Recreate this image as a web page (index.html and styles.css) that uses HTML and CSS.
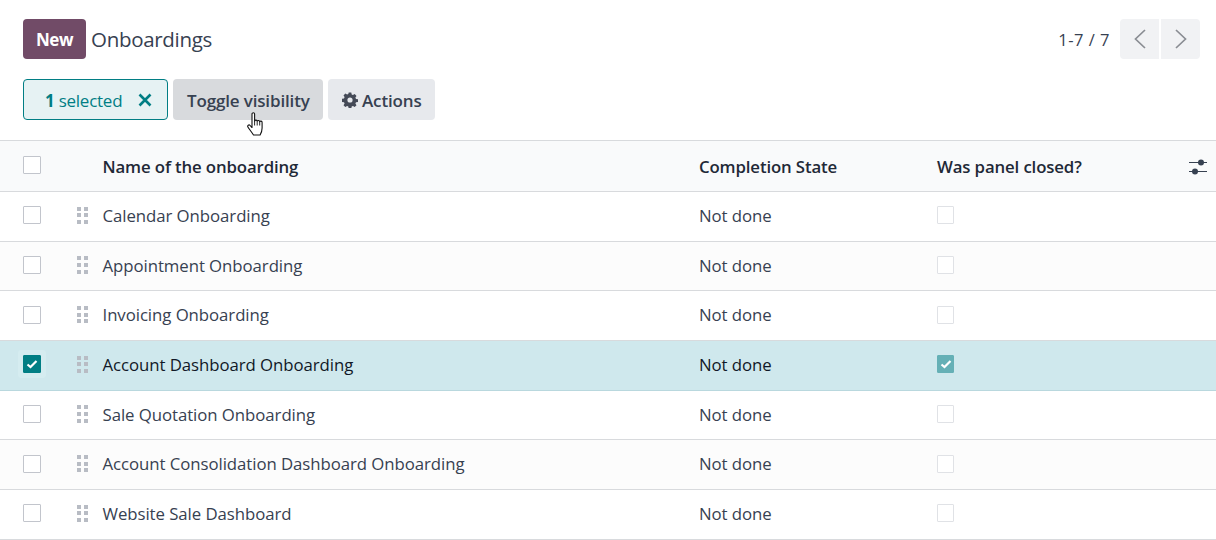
FILE: index.html
```html
<!DOCTYPE html>
<html lang="en">
<head>
<meta charset="utf-8">
<title>Onboardings</title>
<link rel="stylesheet" href="styles.css">
</head>
<body>
<header class="top">
  <button class="btn-new">New</button>
  <h1 class="title">Onboardings</h1>
  <div class="pager">
    <span class="pager-text">1-7 / 7</span>
    <div class="pager-btns">
      <button class="pager-btn"><svg width="16" height="22" viewBox="0 0 16 22"><path d="M13 2 3.500 11 13 20" fill="none" stroke="#8a8d93" stroke-width="1.700"/></svg></button>
      <button class="pager-btn"><svg width="16" height="22" viewBox="0 0 16 22"><path d="M3 2 12.500 11 3 20" fill="none" stroke="#8a8d93" stroke-width="1.700"/></svg></button>
    </div>
  </div>
</header>
<div class="actions">
  <div class="selected"><span><b>1</b> selected</span><svg width="14" height="14" viewBox="0 0 14 14"><path d="M1.500 1.500 12.500 12.500M12.500 1.500 1.500 12.500" stroke="#017e84" stroke-width="2.600"/></svg></div>
  <button class="btn-gray hover">Toggle visibility
    <svg class="cursor" width="18" height="24" viewBox="0 0 18 24"><path d="M5 2c0-1.600 2.600-1.600 2.600 0v7c.4-1.300 2.600-1.200 2.600.3.400-1.200 2.500-1 2.500.4.500-1 2.400-.7 2.400.7v5.600c0 3-1.400 6-2 7H6.500C5 20.500 1.700 16.500.9 15c-.8-1.500 1-2.800 2.200-1.500L5 15.500z" fill="#fff" stroke="#111" stroke-width="1.100" stroke-linejoin="round"/><path d="M7.600 9v4.500M10.200 9.500v4M12.700 10v3.500" stroke="#111" stroke-width=".9"/></svg>
  </button>
  <button class="btn-gray"><svg class="gear" width="16" height="16" viewBox="0 0 16 16"><path fill-rule="evenodd" d="M6.700.5h2.600l.4 2 1.200.6 1.800-1 1.800 1.800-1.100 1.700.6 1.300 2 .4v2.600l-2 .4-.6 1.300 1.100 1.700-1.800 1.800-1.800-1.100-1.200.6-.4 2H6.700l-.4-2-1.200-.6-1.800 1.100-1.800-1.800 1.100-1.700-.6-1.300-2-.4V6.800l2-.4.6-1.300-1.100-1.700 1.800-1.800 1.800 1 1.200-.6zM8 5.400a2.600 2.600 0 1 0 0 5.200 2.600 2.600 0 0 0 0-5.200z" fill="#454a57"/></svg> Actions</button>
</div>
<table class="list">
  <colgroup><col class="c-check"><col class="c-handle"><col class="c-name"><col class="c-state"><col class="c-closed"><col class="c-opt"></colgroup>
  <thead>
    <tr>
      <th><span class="box"></span></th>
      <th></th>
      <th>Name of the onboarding</th>
      <th>Completion State</th>
      <th>Was panel closed?</th>
      <th class="opt"><svg width="18" height="18" viewBox="0 0 18 18"><path d="M0 4.500h18M0 13.500h18" stroke="#374151" stroke-width="1"/><circle cx="12" cy="4.500" r="3" fill="#374151"/><circle cx="6" cy="13.500" r="3" fill="#374151"/></svg></th>
    </tr>
  </thead>
  <tbody>
    <tr><td><span class="box"></span></td><td><span class="grip"><i></i><i></i><i></i><i></i><i></i><i></i></span></td><td>Calendar Onboarding</td><td>Not done</td><td><span class="box light"></span></td><td></td></tr>
    <tr class="alt"><td><span class="box"></span></td><td><span class="grip"><i></i><i></i><i></i><i></i><i></i><i></i></span></td><td>Appointment Onboarding</td><td>Not done</td><td><span class="box light"></span></td><td></td></tr>
    <tr><td><span class="box"></span></td><td><span class="grip"><i></i><i></i><i></i><i></i><i></i><i></i></span></td><td>Invoicing Onboarding</td><td>Not done</td><td><span class="box light"></span></td><td></td></tr>
    <tr class="sel"><td><span class="halo"><span class="box on"><svg width="12" height="10" viewBox="0 0 12 10"><path d="M1.500 5.500 4.500 8 10.500 2" fill="none" stroke="#fff" stroke-width="2.200"/></svg></span></span></td><td><span class="grip"><i></i><i></i><i></i><i></i><i></i><i></i></span></td><td>Account Dashboard Onboarding</td><td>Not done</td><td><span class="box on dim"><svg width="12" height="10" viewBox="0 0 12 10"><path d="M1.500 5.500 4.500 8 10.500 2" fill="none" stroke="#fff" stroke-width="2.200"/></svg></span></td><td></td></tr>
    <tr><td><span class="box"></span></td><td><span class="grip"><i></i><i></i><i></i><i></i><i></i><i></i></span></td><td>Sale Quotation Onboarding</td><td>Not done</td><td><span class="box light"></span></td><td></td></tr>
    <tr class="alt"><td><span class="box"></span></td><td><span class="grip"><i></i><i></i><i></i><i></i><i></i><i></i></span></td><td>Account Consolidation Dashboard Onboarding</td><td>Not done</td><td><span class="box light"></span></td><td></td></tr>
    <tr><td><span class="box"></span></td><td><span class="grip"><i></i><i></i><i></i><i></i><i></i><i></i></span></td><td>Website Sale Dashboard</td><td>Not done</td><td><span class="box light"></span></td><td></td></tr>
  </tbody>
</table>
</body>
</html>
```
FILE: styles.css
```css
* { box-sizing: border-box; }
html, body { margin: 0; padding: 0; background: #fff; overflow: hidden; }
body { width: 1216px; height: 540px; font-family: "Open Sans", "Noto Sans", sans-serif; font-size: 17px; color: #374151; }
button { font: inherit; border: 0; cursor: pointer; }

.top { display: flex; align-items: center; padding: 19px 16px 0 23px; height: 59px; }
.btn-new { width: 63px; height: 40px; background: #714b67; color: #fff; font-weight: 700; border-radius: 4px; padding: 0; font-size: 17px; letter-spacing: -.45px; }
.title { margin: 0 0 0 5px; font-size: 20.5px; font-weight: 400; color: #374151; letter-spacing: -.3px; }
.pager { margin-left: auto; display: flex; align-items: center; gap: 10px; }
.pager-text { font-size: 16.5px; letter-spacing: .5px; }
.pager-btns { display: flex; gap: 2px; }
.pager-btn { width: 39px; height: 40px; background: #f1f2f4; padding: 0; display: flex; align-items: center; justify-content: center; }
.pager-btn:first-child { border-radius: 4px 0 0 4px; }
.pager-btn:last-child { border-radius: 0 4px 4px 0; }

.actions { display: flex; gap: 5px; padding: 20px 0 0 23px; height: 81px; }
.selected { width: 145px; height: 41px; padding: 1px 15px 0 21px; background: #e6f2f3; border: 1px solid #017e84; border-radius: 4px; color: #017e84; display: flex; align-items: center; justify-content: space-between; letter-spacing: -.25px; }
.selected b { font-weight: 700; }
.btn-gray { position: relative; height: 41px; padding: 1px 13px 0 14px; background: #e7e9ed; color: #374151; border-radius: 4px; font-weight: 600; letter-spacing: -.15px; white-space: nowrap; display: flex; align-items: center; gap: 4px; }
.btn-gray.hover { background: #d8dadd; width: 150px; }
.cursor { position: absolute; left: 74px; top: 33px; }

.list { width: 1216px; table-layout: fixed; border-collapse: collapse; }
.c-check { width: 75px; }
.c-handle { width: 27.5px; }
.c-name { width: 596.5px; }
.c-state { width: 238px; }
.c-closed { width: 241px; }
.c-opt { width: 38px; }
.list tr { height: 49.7px; border-top: 1px solid #d8dadd; }
.list tr:last-child { border-bottom: 1px solid #d8dadd; }
.list th, .list td { padding: 0; vertical-align: middle; text-align: left; line-height: 1; }
.list th:first-child, .list td:first-child { padding-left: 23px; }
.list thead tr { background: #f9fafb; height: 51px; }
.list th { padding-top: 2px; font-weight: 600; color: #1f2937; letter-spacing: -.13px; font-size: 16.8px; }
.list td { font-size: 16.8px; letter-spacing: -.06px; }
.list .alt { background: #fcfcfc; }
.list .sel { background: #cfe8ed; color: #111827; border-bottom: 1px solid #b9d8de; }
.list .opt { padding-top: 0; }
.opt svg { display: block; margin: 1px 0 0 11px; }

.box { display: block; width: 18px; height: 18px; margin-bottom: 2px; border: 1px solid #c2c5cc; background: #fff; border-radius: 1px; }
.box.light { border-color: #e0e2e6; width: 17px; height: 18px; }
.box.on { background: #017e84; border-color: #017e84; display: flex; align-items: center; justify-content: center; }
.box.dim { background: #65b0b6; border-color: #65b0b6; width: 17px; }
.list th .box { margin-bottom: 4px; }
.halo { display: block; width: 18px; height: 18px; margin-bottom: 2px; box-shadow: 0 0 0 5px #d5ecf0; border-radius: 1px; }

.grip { display: grid; grid-template-columns: 4px 4px; gap: 2.7px 3px; width: 11px; margin: 0 0 2px 2px; }
.grip i { display: block; width: 4px; height: 4px; background: #b8bcc4; }
```
